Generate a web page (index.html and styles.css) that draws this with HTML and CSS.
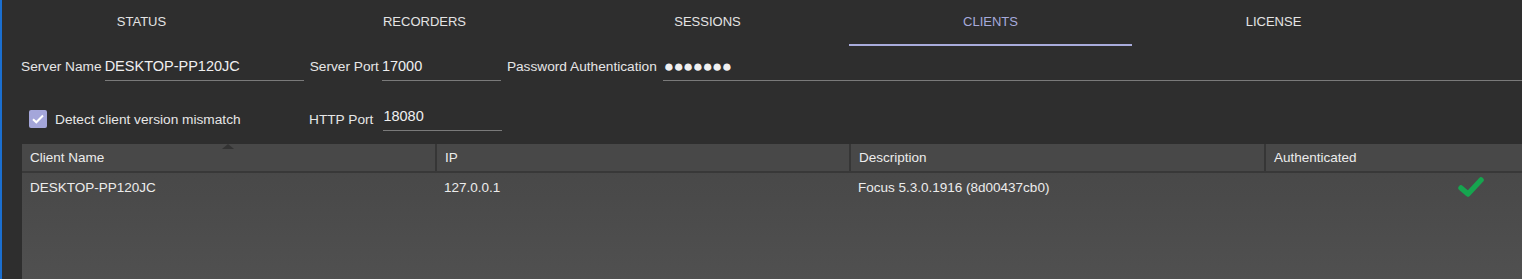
FILE: index.html
```html
<!DOCTYPE html>
<html lang="en">
<head>
    <meta charset="UTF-8">
    <title>Server - Clients</title>
    <link rel="stylesheet" href="styles.css">
</head>
<body>

    <div class="window">
        <nav class="tabs">
            <div class="tab">STATUS</div>
            <div class="tab">RECORDERS</div>
            <div class="tab">SESSIONS</div>
            <div class="tab active">CLIENTS</div>
            <div class="tab">LICENSE</div>
        </nav>

        <div class="settings">
            <div class="row">
                <label class="label">Server Name</label>
                <div class="field name-field big">DESKTOP-PP120JC</div>
                <label class="label">Server Port</label>
                <div class="field port-field big">17000</div>
                <label class="label">Password Authentication</label>
                <div class="field pass-field">&#9679;&#9679;&#9679;&#9679;&#9679;&#9679;&#9679;</div>
            </div>
            <div class="row second">
                <label class="check">
                    <span class="box">
                        <svg width="12" height="10" viewBox="0 0 12 10"><path d="M1 5.2 L4.3 8.3 L11 1.5" fill="none" stroke="#fff" stroke-width="2"/></svg>
                    </span>
                    Detect client version mismatch
                </label>
                <label class="label http">HTTP Port</label>
                <div class="field port-field big">18080</div>
            </div>
        </div>

        <table class="clients">
            <thead>
                <tr>
                    <th class="col-name">Client Name<span class="sort"></span></th>
                    <th class="col-ip">IP</th>
                    <th class="col-desc">Description</th>
                    <th>Authenticated</th>
                </tr>
            </thead>
            <tbody>
                <tr>
                    <td>DESKTOP-PP120JC</td>
                    <td>127.0.0.1</td>
                    <td>Focus 5.3.0.1916 (8d00437cb0)</td>
                    <td class="auth">
                        <svg width="26" height="22" viewBox="0 0 26 22"><path d="M3 12 L10 18 L23 4" fill="none" stroke="#16a54f" stroke-width="5.5" stroke-linecap="round" stroke-linejoin="round"/></svg>
                    </td>
                </tr>
                <tr class="filler"><td colspan="4"></td></tr>
            </tbody>
        </table>
    </div>

</body>
</html>
```

FILE: styles.css
```css
html, body {
    margin: 0;
    height: 100%;
}

body {
    background-color: #2e2e2e;
    color: #e6e6e6;
    font-family: 'Liberation Sans', Arial, sans-serif;
    font-size: 13.7px;
    overflow: hidden;
}

.window {
    height: 100%;
    border-left: 2px solid #1b6fd0;
    display: flex;
    flex-direction: column;
}

.tabs {
    display: flex;
    height: 46px;
    margin-left: -2px;
}

.tab {
    width: 283px;
    display: flex;
    align-items: center;
    justify-content: center;
    padding-bottom: 3px;
    box-sizing: border-box;
    color: #e4e4e4;
    font-size: 13px;
}

.tab.active {
    color: #a6aadb;
    border-bottom: 2px solid #a9acdc;
    padding-bottom: 1px;
}

.settings {
    padding-left: 19px;
}

.row {
    display: flex;
    align-items: flex-end;
    height: 35px;
}

.row.second {
    height: 50px;
}

.label {
    padding: 0 3px 7px 0;
    color: #e6e6e6;
}

.field {
    border-bottom: 1px solid #7a7a7a;
    padding: 0 0 6px 0;
    box-sizing: border-box;
    color: #f0f0f0;
}

.big {
    font-size: 14.5px;
}

.name-field {
    width: 199px;
    margin-right: 6px;
}

.port-field {
    width: 119px;
    margin-right: 6px;
}

.pass-field {
    flex: 1;
    margin-left: 3px;
    font-size: 17px;
    letter-spacing: -0.6px;
    padding: 0 0 3px 1px;
}

.check {
    display: flex;
    align-items: center;
    gap: 8px;
    margin-left: 8px;
    width: 280px;
    padding-bottom: 3px;
}

.box {
    width: 18px;
    height: 18px;
    border-radius: 2px;
    background-color: #a4a6da;
    display: flex;
    align-items: center;
    justify-content: center;
}

.http {
    padding-right: 10px;
    padding-bottom: 4px;
}

.clients {
    margin: 13px 0 0 20px;
    flex: 1;
    width: calc(100% - 20px);
    border-collapse: collapse;
    background: linear-gradient(#474747, #4a4a4a 40%, #505050);
    table-layout: fixed;
    font-size: 13.5px;
}

.clients th {
    height: 27px;
    text-align: left;
    font-weight: normal;
    padding: 0 8px;
    background-color: #484848;
    border-bottom: 2px solid #383838;
    border-right: 2px solid #363636;
    position: relative;
    color: #ececec;
}

.clients th:last-child {
    border-right: none;
}

.col-name { width: 397px; }
.col-ip { width: 396px; }
.col-desc { width: 397px; }

.sort {
    position: absolute;
    top: 0;
    left: 200px;
    width: 0;
    height: 0;
    border-left: 6px solid transparent;
    border-right: 6px solid transparent;
    border-bottom: 5px solid #333;
}

.clients td {
    height: 27px;
    padding: 0 8px;
    vertical-align: middle;
    color: #ececec;
}

.clients td.auth {
    text-align: right;
    padding: 2px 38px 0 0;
}

.clients tr.filler td {
    height: auto;
}
```
